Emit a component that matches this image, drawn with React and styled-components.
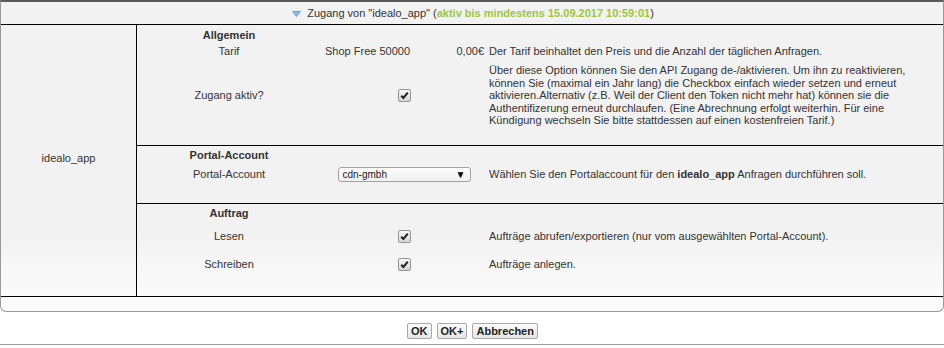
import React from 'react'
import styled, { createGlobalStyle } from 'styled-components'

const GlobalStyle = createGlobalStyle`
  body {
    margin: 0;
    background: #fff;
    font-family: "Liberation Sans", Arial, sans-serif;
    font-size: 11px;
    color: #333;
  }
`

const Dialog = styled.div`
  width: 944px;
  box-sizing: border-box;
`

const Panel = styled.div`
  border: 1px solid #9a9a9a;
  border-top: 2px solid #5a5a5a;
  border-radius: 0 0 6px 6px;
  background: linear-gradient(to bottom, #f2f2f2 0, #f2f2f2 230px, #fbfbfb 296px, #fbfbfb 100%);
`

const Header = styled.div`
  height: 22px;
  border-bottom: 1px solid #000;
  display: flex;
  align-items: center;
  justify-content: center;
  padding-left: 2px;
`

const Arrow = styled.svg`
  width: 9px;
  height: 6px;
  margin-right: 6px;
  margin-top: 2px;
`

const Active = styled.span`
  color: #9dc63a;
  font-weight: bold;
`

const Body = styled.div`
  display: grid;
  grid-template-columns: 136px 1fr;
  border-bottom: 1px solid #000;
`

const NameCell = styled.div`
  border-right: 1px solid #000;
  display: flex;
  align-items: center;
  justify-content: center;
  padding-bottom: 5px;
`

const Section = styled.div`
  box-sizing: border-box;
  height: ${(p) => p.h}px;
  padding-top: ${(p) => p.pt || 3}px;
  border-bottom: ${(p) => (p.last ? 'none' : '1px solid #000')};
`

const Row = styled.div`
  display: grid;
  grid-template-columns: 184px 165px 1fr;
  align-items: center;
  margin-top: ${(p) => p.mt || 0}px;
  line-height: ${(p) => p.lh || 13}px;
`

const Title = styled.div`
  width: 184px;
  text-align: center;
  font-weight: bold;
  line-height: 13px;
`

const Label = styled.div`
  text-align: center;
`

const Middle = styled.div`
  display: flex;
  justify-content: ${(p) => (p.split ? 'space-between' : 'center')};
  align-items: center;
  padding: ${(p) => (p.split ? '0 2px 0 4px' : '0 0 0 1px')};
`

const Desc = styled.div`
  padding: 0 30px 0 3px;
  line-height: 12.5px;
`

const Check = styled.span`
  display: inline-flex;
  align-items: center;
  justify-content: center;
  width: 11px;
  height: 11px;
  border: 1px solid #959595;
  border-radius: 2px;
  background: linear-gradient(to bottom, #f8f8f8, #d6d6d6);
`

const Select = styled.div`
  box-sizing: border-box;
  width: 133px;
  height: 15px;
  border: 1px solid #a3a3a3;
  border-radius: 3px;
  background: linear-gradient(to bottom, #fdfdfd, #f0f0f0);
  display: flex;
  align-items: center;
  justify-content: space-between;
  padding: 0 4px 0 4px;
  font-size: 10px;
  color: #222;
`

const Caret = styled.span`
  font-size: 10px;
  color: #000;
`

const Spacer = styled.div`
  height: 14px;
`

const ButtonBar = styled.div`
  height: 33px;
  border-bottom: 1px solid #9a9a9a;
  display: flex;
  justify-content: center;
  align-items: flex-start;
  gap: 5px;
  padding-top: 11px;
  box-sizing: border-box;
  padding-left: 1px;
`

const Button = styled.button`
  font-family: "Liberation Sans", Arial, sans-serif;
  font-size: 11px;
  font-weight: bold;
  color: #222;
  height: 16px;
  padding: 0 3px;
  border: 1px solid #a8a8a8;
  border-radius: 2px;
  background: linear-gradient(to bottom, #fbfbfb, #e6e6e6);
  line-height: 14px;
`

const Tick = () => (
  <Check>
    <svg width="9" height="9" viewBox="0 0 9 9">
      <path d="M1.2 4.8 L3.4 7 L7.8 1.6" fill="none" stroke="#222" strokeWidth="2" />
    </svg>
  </Check>
)

const App = () => (
  <Dialog>
    <GlobalStyle />
    <Panel>
      <Header>
        <Arrow viewBox="0 0 9 6">
          <path d="M0.5 0.5 H8.5 L4.5 5.5 Z" fill="#8fb8e3" stroke="#5b8fc9" strokeWidth="0.8" />
        </Arrow>
        <span>
          Zugang von "idealo_app" (<Active>aktiv bis mindestens 15.09.2017 10:59:01</Active>)
        </span>
      </Header>
      <Body>
        <NameCell>idealo_app</NameCell>
        <div>
          <Section h={121} pt={4}>
            <Title>Allgemein</Title>
            <Row mt={3}>
              <Label>Tarif</Label>
              <Middle split>
                <span>Shop Free 50000</span>
                <span>0,00€</span>
              </Middle>
              <Desc>Der Tarif beinhaltet den Preis und die Anzahl der täglichen Anfragen.</Desc>
            </Row>
            <Row mt={6}>
              <Label>Zugang aktiv?</Label>
              <Middle>
                <Tick />
              </Middle>
              <Desc>
                Über diese Option können Sie den API Zugang de-/aktivieren. Um ihn zu reaktivieren,
                können Sie (maximal ein Jahr lang) die Checkbox einfach wieder setzen und erneut
                aktivieren.Alternativ (z.B. Weil der Client den Token nicht mehr hat) können sie die
                Authentifizerung erneut durchlaufen. (Eine Abrechnung erfolgt weiterhin. Für eine
                Kündigung wechseln Sie bitte stattdessen auf einen kostenfreien Tarif.)
              </Desc>
            </Row>
          </Section>
          <Section h={58}>
            <Title>Portal-Account</Title>
            <Row mt={5} lh={15}>
              <Label>Portal-Account</Label>
              <Middle>
                <Select>
                  <span>cdn-gmbh</span>
                  <Caret>▼</Caret>
                </Select>
              </Middle>
              <Desc>
                Wählen Sie den Portalaccount für den <b>idealo_app</b> Anfragen durchführen soll.
              </Desc>
            </Row>
          </Section>
          <Section h={92} last>
            <Title>Auftrag</Title>
            <Row mt={9} lh={14}>
              <Label>Lesen</Label>
              <Middle>
                <Tick />
              </Middle>
              <Desc>Aufträge abrufen/exportieren (nur vom ausgewählten Portal-Account).</Desc>
            </Row>
            <Row mt={14} lh={14}>
              <Label>Schreiben</Label>
              <Middle>
                <Tick />
              </Middle>
              <Desc>Aufträge anlegen.</Desc>
            </Row>
          </Section>
        </div>
      </Body>
      <Spacer />
    </Panel>
    <ButtonBar>
      <Button>OK</Button>
      <Button>OK+</Button>
      <Button>Abbrechen</Button>
    </ButtonBar>
  </Dialog>
)

export default App
